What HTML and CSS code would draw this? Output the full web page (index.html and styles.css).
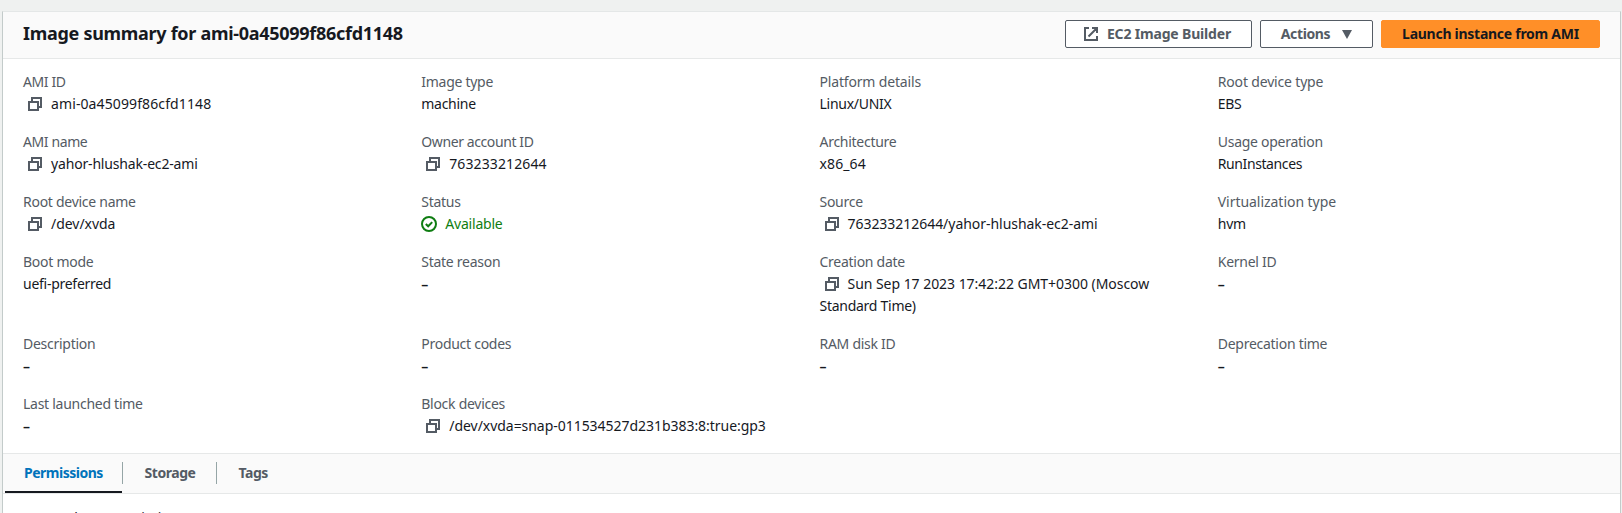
FILE: index.html
```html
<!DOCTYPE html>
<html lang="en">
<head>
<meta charset="utf-8">
<title>Image summary</title>
<link rel="stylesheet" href="styles.css">
</head>
<body>
<svg class="defs" width="0" height="0" aria-hidden="true">
  <symbol id="copy" viewBox="0 0 16 16"><path d="M2 6h9v8H2zM5 5V2h9v9h-3" fill="none" stroke="currentColor" stroke-width="2"/></symbol>
</svg>
<main class="panel">
  <header class="header">
    <h2 class="title">Image summary for ami-0a45099f86cfd1148</h2>
    <div class="buttons">
      <button class="btn btn-builder"><svg class="icon" viewBox="0 0 16 16"><path d="M6 2H2v12h12v-4M9 2h5v5M5.500 10.500l8-8" fill="none" stroke="currentColor" stroke-width="2"/></svg><span>EC2 Image Builder</span></button>
      <button class="btn btn-actions"><span>Actions</span><svg class="caret" viewBox="0 0 10 9"><path d="M0 0h10L5 9z" fill="currentColor"/></svg></button>
      <button class="btn btn-primary"><span>Launch instance from AMI</span></button>
    </div>
  </header>
  <dl class="grid">
    <div><dt class="tight">AMI ID</dt><dd class="id"><svg class="copy"><use href="#copy"/></svg>ami-0a45099f86cfd1148</dd></div>
    <div><dt>Image type</dt><dd>machine</dd></div>
    <div><dt class="loose">Platform details</dt><dd>Linux/UNIX</dd></div>
    <div><dt class="loose">Root device type</dt><dd>EBS</dd></div>
    <div><dt class="tight">AMI name</dt><dd class="loose"><svg class="copy"><use href="#copy"/></svg>yahor-hlushak-ec2-ami</dd></div>
    <div><dt class="tight">Owner account ID</dt><dd class="id"><svg class="copy"><use href="#copy"/></svg>763233212644</dd></div>
    <div><dt>Architecture</dt><dd class="id">x86_64</dd></div>
    <div><dt>Usage operation</dt><dd class="tight">RunInstances</dd></div>
    <div><dt>Root device name</dt><dd class="wide"><svg class="copy"><use href="#copy"/></svg>/dev/xvda</dd></div>
    <div><dt>Status</dt><dd class="ok"><svg class="status" viewBox="0 0 16 16"><circle cx="8" cy="8" r="7"/><path d="M4.800 8l2.400 2.300 4-4.200"/></svg>Available</dd></div>
    <div><dt>Source</dt><dd class="wide"><svg class="copy"><use href="#copy"/></svg>763233212644/yahor-hlushak-ec2-ami</dd></div>
    <div><dt class="wide">Virtualization type</dt><dd>hvm</dd></div>
    <div><dt>Boot mode</dt><dd>uefi-preferred</dd></div>
    <div><dt>State reason</dt><dd class="dash">–</dd></div>
    <div><dt>Creation date</dt><dd><svg class="copy"><use href="#copy"/></svg><span class="wide">Sun Sep 17 2023 17:42:22 GMT+0300 (Moscow</span><br>Standard Time)</dd></div>
    <div><dt>Kernel ID</dt><dd class="dash">–</dd></div>
    <div><dt>Description</dt><dd class="dash">–</dd></div>
    <div><dt>Product codes</dt><dd class="dash">–</dd></div>
    <div><dt>RAM disk ID</dt><dd class="dash">–</dd></div>
    <div><dt>Deprecation time</dt><dd class="dash">–</dd></div>
    <div><dt>Last launched time</dt><dd class="dash">–</dd></div>
    <div><dt>Block devices</dt><dd class="wide"><svg class="copy"><use href="#copy"/></svg>/dev/xvda=snap-011534527d231b383:8:true:gp3</dd></div>
  </dl>
  <nav class="tabs">
    <a class="tab active">Permissions</a>
    <a class="tab">Storage</a>
    <a class="tab">Tags</a>
  </nav>
  <section class="content">Image share permissions</section>
</main>
</body>
</html>
```
FILE: styles.css
```css
* { box-sizing: border-box; }
html { overflow: hidden; }
body { margin: 0; height: 513px; overflow: hidden; background: #eff1f0; padding: 11px 0 0 2px; font: 14px/22px "Noto Sans", sans-serif; color: #16191f; }
.defs { display: block; height: 0; }
.panel { width: 1619px; height: 502px; overflow: hidden; background: #fff; border: 1px solid #c3cbca; border-top-color: #e4e7e7; border-bottom: 0; }
.header { height: 47px; display: flex; align-items: center; justify-content: space-between; padding: 0 20px 2px; background: #fafafa; border-bottom: 1px solid #e6e8e8; }
.title { margin: 0; padding-bottom: 2px; font-size: 18px; line-height: 22px; font-weight: 700; letter-spacing: -.29px; white-space: nowrap; }
.buttons { display: flex; gap: 8px; }
.btn { height: 28px; padding: 0; display: flex; align-items: center; justify-content: center; border: 1px solid #545b64; border-radius: 2px; background: #fff; color: #545b64; font: 700 14px/22px "Noto Sans", sans-serif; white-space: nowrap; }
.btn-builder { width: 187px; gap: 8px; padding-right: 3px; letter-spacing: -.17px; }
.btn-actions { width: 113px; gap: 12px; letter-spacing: -.35px; }
.btn-primary { width: 219px; background: #ff8f28; border-color: #ff8f28; color: #16191f; letter-spacing: -.27px; }
.icon { width: 16px; height: 16px; }
.caret { width: 10px; height: 9px; }
.grid { margin: 0; padding: 12px 20px 16px; display: grid; grid-template-columns: repeat(4, 1fr); gap: 16px; letter-spacing: -.27px; }
dt { color: #545b64; }
dd { margin: 0; white-space: nowrap; }
.tight { letter-spacing: -.4px; }
.loose { letter-spacing: -.17px; }
.wide { letter-spacing: -.04px; }
.id { letter-spacing: .11px; }
.dash { font-weight: 600; }
.copy { width: 16px; height: 16px; margin: 0 8px 0 4px; vertical-align: -3px; color: #545b64; }
.ok { color: #0f7d12; letter-spacing: -.2px; }
.status { width: 16px; height: 16px; margin-right: 8px; vertical-align: -3px; fill: none; stroke: currentColor; stroke-width: 2; }
.tabs { height: 41px; display: flex; align-items: stretch; padding-left: 2px; background: #fafafa; border: solid #e6e8e8; border-width: 1px 0; }
.tab { display: flex; align-items: center; padding: 0 20.500px 1px; font-weight: 700; color: #545b64; letter-spacing: -.45px; }
.tab + .tab::before { content: ""; width: 1px; height: 22px; margin: 0 21.500px 0 -20.500px; background: #95a5a6; }
.active { width: 117px; padding: 0 0 0 19px; color: #0073bb; border-bottom: 2px solid #16191f; letter-spacing: -.5px; }
.content { padding: 13px 20px; letter-spacing: -.2px; }
```
